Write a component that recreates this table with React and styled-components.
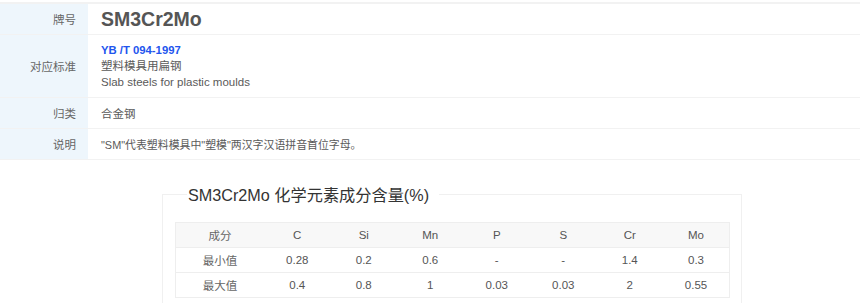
import React from 'react';
import styled, { createGlobalStyle } from 'styled-components';

const GlobalStyle = createGlobalStyle`
  body {
    margin: 0;
    background: #fff;
    font-family: "Liberation Sans", Arial, "Noto Sans CJK SC", sans-serif;
    color: #555;
  }
`;

const info = [
  { label: '牌号', kind: 'title', value: 'SM3Cr2Mo' },
  { label: '对应标准', kind: 'std' },
  { label: '归类', value: '合金钢' },
  { label: '说明', value: '"SM"代表塑料模具中"塑模"两汉字汉语拼音首位字母。', small: true },
];

const heads = ['成分', 'C', 'Si', 'Mn', 'P', 'S', 'Cr', 'Mo'];
const rows = [
  ['最小值', '0.28', '0.2', '0.6', '-', '-', '1.4', '0.3'],
  ['最大值', '0.4', '0.8', '1', '0.03', '0.03', '2', '0.55'],
];

function App() {
  return (
    <Page>
      <GlobalStyle />
      <InfoTable>
        {info.map((r) => (
          <InfoRow key={r.label}>
            <Label>{r.label}</Label>
            <Value $tall={r.kind === 'std'} $small={r.small}>
              {r.kind === 'title' && <Title>{r.value}</Title>}
              {r.kind === 'std' && (
                <>
                  <StdLink>YB /T 094-1997</StdLink>
                  <Line>塑料模具用扁钢</Line>
                  <Line>Slab steels for plastic moulds</Line>
                </>
              )}
              {!r.kind && r.value}
            </Value>
          </InfoRow>
        ))}
      </InfoTable>

      <Box>
        <Legend>SM3Cr2Mo 化学元素成分含量(%)</Legend>
        <Chem>
          <thead>
            <tr>
              {heads.map((h) => (
                <Th key={h}>{h}</Th>
              ))}
            </tr>
          </thead>
          <tbody>
            {rows.map((r) => (
              <tr key={r[0]}>
                {r.map((c, i) => (
                  <Td key={i}>{c}</Td>
                ))}
              </tr>
            ))}
          </tbody>
        </Chem>
      </Box>
    </Page>
  );
}

const Page = styled.div`
  padding-top: 2px;
`;

const InfoTable = styled.div`
  border-top: 2px solid #f2f2f2;
  display: flex;
  flex-direction: column;
`;

const InfoRow = styled.div`
  display: grid;
  grid-template-columns: 88px 1fr;
  border-bottom: 1px solid #f2f2f2;
`;

const Label = styled.div`
  background: #eef6fc;
  padding-right: 12px;
  font-size: 11.5px;
  color: #666;
  display: flex;
  align-items: center;
  justify-content: flex-end;
`;

const Value = styled.div`
  padding: ${(p) => (p.$tall ? '7px 13px' : '0 13px')};
  min-height: 30px;
  display: flex;
  flex-direction: column;
  justify-content: center;
  font-size: ${(p) => (p.$small ? '10.9px' : '11.5px')};
  color: #5a5a5a;
`;

const Title = styled.div`
  font-size: 19.5px;
  font-weight: bold;
  color: #555;
  line-height: 30px;
`;

const StdLink = styled.a`
  color: #2255ee;
  font-weight: bold;
  font-size: 11.3px;
  line-height: 16px;
`;

const Line = styled.div`
  line-height: 16px;
`;

const Box = styled.fieldset`
  margin: 22px 0 0 162px;
  width: 580px;
  box-sizing: border-box;
  border: 1px solid #f0f0f0;
  padding: 16px 11px 8px 12px;
`;

const Legend = styled.legend`
  margin-left: 12px;
  padding: 0 10px 0 1px;
  font-size: 16.2px;
  color: #333;
`;

const Chem = styled.table`
  width: 100%;
  table-layout: fixed;
  border-collapse: collapse;
  border: 1px solid #eee;
  font-size: 11.5px;
  color: #555;
  text-align: center;
  th:first-child,
  td:first-child {
    width: 88px;
    color: #666;
  }
`;

const Th = styled.th`
  background: #f8f8f8;
  font-weight: normal;
  height: 24px;
  padding: 0;
  border-bottom: 1px solid #eee;
`;

const Td = styled.td`
  height: 24px;
  padding: 0;
  border-bottom: 1px solid #eee;
`;

export default App;
